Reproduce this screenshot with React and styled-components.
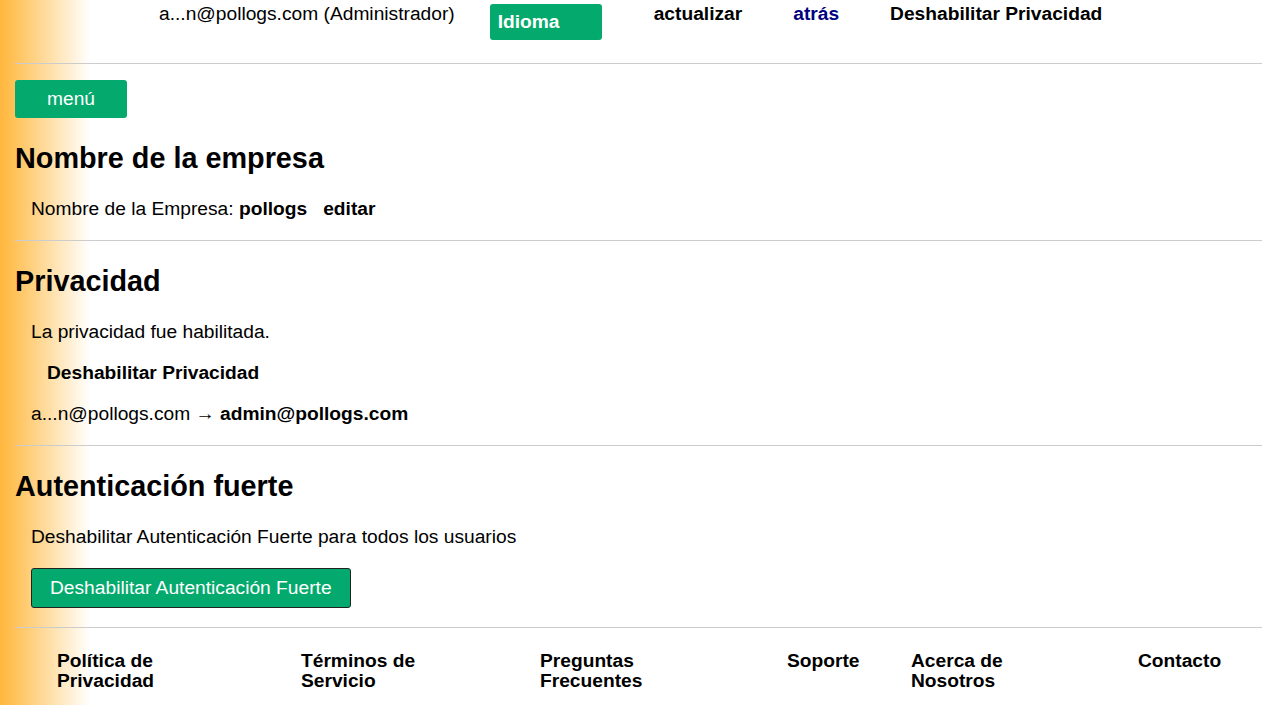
import React from 'react';
import styled, { createGlobalStyle } from 'styled-components';

const GlobalStyle = createGlobalStyle`
    html, body {
        margin: 0;
        padding: 0;
    }
    body {
        min-height: 100vh;
        font-family: "Liberation Sans", Arial, sans-serif;
        font-size: 19.2px;
        color: #000;
        background: linear-gradient(to right, #ffb73f 0px, #ffbd4b 8px, #ffffff 90px);
        background-attachment: fixed;
    }
`;

const green = '#04aa6d';

const Page = styled.div`
    padding: 0 17px 0 15px;
`;

const Header = styled.div`
    display: flex;
    align-items: flex-start;
    height: 63px;
    padding: 3px 0 0 144px;
    box-sizing: border-box;
    line-height: 22px;
`;

const UserName = styled.span`
    margin-right: 35px;
`;

const LangButton = styled.button`
    width: 112px;
    height: 36px;
    margin: 1px 26px 0 0;
    padding: 6px 8px;
    box-sizing: border-box;
    border: none;
    border-radius: 3px;
    background: ${green};
    color: #fff;
    font: bold 19.2px/22px "Liberation Sans", Arial, sans-serif;
    text-align: left;
`;

const HeaderLink = styled.a`
    padding: 0 25.5px;
    font-weight: bold;
    color: ${(p) => (p.$navy ? '#000080' : '#000')};
    text-decoration: none;
    cursor: pointer;

    &:first-of-type {
        padding-left: 26px;
    }
`;

const Divider = styled.hr`
    margin: 0;
    border: none;
    border-top: 1px solid #cccccc;
`;

const MenuButton = styled.button`
    display: block;
    width: 112px;
    height: 38px;
    margin-top: 16px;
    border: none;
    border-radius: 3px;
    background: ${green};
    color: #fff;
    font: 19.2px "Liberation Sans", Arial, sans-serif;
`;

const Section = styled.section`
    display: flex;
    flex-direction: column;
    align-items: flex-start;
    gap: 19px;
    padding: 24px 0 20px;
`;

const Title = styled.h2`
    margin: 0 0 4px;
    font-size: 28.8px;
    line-height: 33px;
    font-weight: bold;
`;

const Line = styled.div`
    margin-left: ${(p) => (p.$indent ? 32 : 16)}px;
    line-height: 22px;
    font-weight: ${(p) => (p.$bold ? 'bold' : 'normal')};
`;

const Strong = styled.b`
    margin-left: ${(p) => p.$gap || 0}px;
`;

const BigButton = styled.button`
    margin: 1px 0 -1px 16px;
    height: 40px;
    padding: 0 18px;
    border: 1px solid #222;
    border-radius: 3px;
    background: ${green};
    color: #fff;
    font: 19.2px "Liberation Sans", Arial, sans-serif;
`;

const Footer = styled.footer`
    display: grid;
    grid-template-columns: 244px 239px 247px 124px 227px auto;
    padding: 23px 0 16px 42px;
`;

const FooterLink = styled.a`
    max-width: 140px;
    font-weight: bold;
    line-height: 19.5px;
    color: #000;
    text-decoration: none;
`;

const footerLinks = [
    'Política de Privacidad',
    'Términos de Servicio',
    'Preguntas Frecuentes',
    'Soporte',
    'Acerca de Nosotros',
    'Contacto',
];

export default function App() {
    return (
        <Page>
            <GlobalStyle />
            <Header>
                <UserName>a...n@pollogs.com (Administrador)</UserName>
                <LangButton>Idioma</LangButton>
                <HeaderLink>actualizar</HeaderLink>
                <HeaderLink $navy>atrás</HeaderLink>
                <HeaderLink>Deshabilitar Privacidad</HeaderLink>
            </Header>
            <Divider />
            <MenuButton>menú</MenuButton>

            <Section>
                <Title>Nombre de la empresa</Title>
                <Line>
                    Nombre de la Empresa: <Strong>pollogs</Strong>
                    <Strong $gap={16}>editar</Strong>
                </Line>
            </Section>
            <Divider />

            <Section>
                <Title>Privacidad</Title>
                <Line>La privacidad fue habilitada.</Line>
                <Line $indent $bold>Deshabilitar Privacidad</Line>
                <Line>
                    a...n@pollogs.com → <Strong>admin@pollogs.com</Strong>
                </Line>
            </Section>
            <Divider />

            <Section>
                <Title>Autenticación fuerte</Title>
                <Line>Deshabilitar Autenticación Fuerte para todos los usuarios</Line>
                <BigButton>Deshabilitar Autenticación Fuerte</BigButton>
            </Section>
            <Divider />

            <Footer>
                {footerLinks.map((label) => (
                    <FooterLink key={label}>{label}</FooterLink>
                ))}
            </Footer>
        </Page>
    );
}
